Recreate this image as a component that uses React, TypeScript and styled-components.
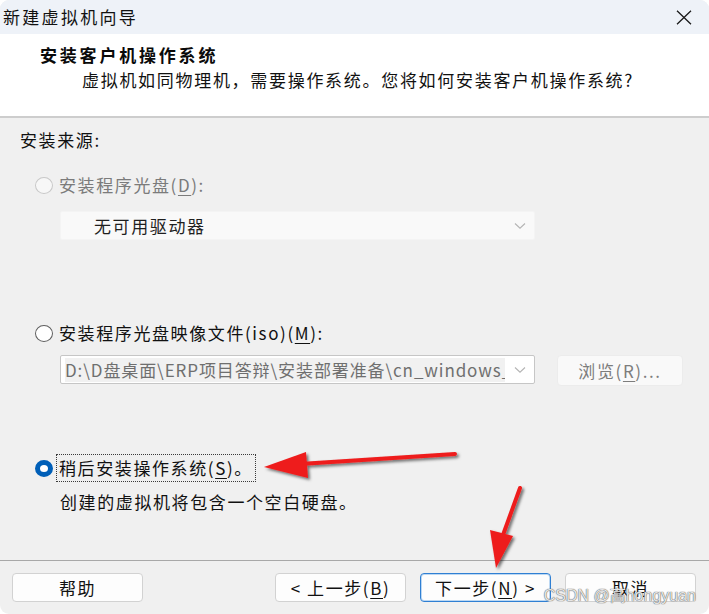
import React from "react";
import styled, { createGlobalStyle } from "styled-components";

const GlobalStyle = createGlobalStyle`
  html, body { margin: 0; padding: 0; background: #ffffff; }
  body { font-family: "Noto Sans CJK SC", "Noto Sans", sans-serif; }
`;

const Window = styled.div`
  position: relative;
  width: 709px;
  height: 614px;
  border-radius: 9px;
  overflow: hidden;
  display: flex;
  flex-direction: column;
  background: #f0f0f0;
  color: #111111;
  font-family: "Noto Sans CJK SC", "Noto Sans", sans-serif;
  font-size: 17px;
  letter-spacing: 1.6px;
`;

const TitleBar = styled.div`
  height: 34px;
  flex: none;
  background: #eef2f8;
  display: flex;
  align-items: center;
  justify-content: space-between;
  padding: 0 17px 0 3px;
  box-sizing: border-box;
`;

const TitleText = styled.span`
  font-size: 17px;
  letter-spacing: 2.3px;
  color: #111;
  line-height: 34px;
`;

const Header = styled.div`
  height: 82px;
  flex: none;
  background: #ffffff;
  padding: 9px 0 0 40px;
  box-sizing: border-box;
  display: flex;
  flex-direction: column;
`;

const HeaderTitle = styled.div`
  font-weight: 700;
  font-size: 17px;
  letter-spacing: 2.8px;
  line-height: 24px;
  color: #0a0a0a;
`;

const HeaderSub = styled.div`
  margin-left: 42px;
  margin-top: 1px;
  line-height: 24px;
  letter-spacing: 1.7px;
  color: #111;
`;

const Divider = styled.div<{ $thick?: boolean }>`
  flex: none;
  height: ${(p) => (p.$thick ? 2 : 1)}px;
  background: ${(p) => (p.$thick ? "#cdcdcd" : "#a8a8a8")};
`;

const Body = styled.div`
  flex: 1;
  padding: 0 20px;
  display: flex;
  flex-direction: column;
`;

const SectionLabel = styled.div`
  margin-top: 10px;
  line-height: 24px;
`;

const RadioRow = styled.label<{ $top: number; $disabled?: boolean }>`
  margin-top: ${(p) => p.$top}px;
  margin-left: 15px;
  height: 24px;
  display: flex;
  align-items: center;
  gap: 6px;
  color: ${(p) => (p.$disabled ? "#7b7b7b" : "#111111")};
`;

const RadioDot = styled.span<{ $checked?: boolean; $disabled?: boolean }>`
  width: 18px;
  height: 17px;
  border-radius: 50%;
  box-sizing: border-box;
  flex: none;
  background: #ffffff;
  border: ${(p) =>
    p.$checked
      ? "5px solid #005fb8"
      : p.$disabled
      ? "1px solid #c8c8c8"
      : "1px solid #5f5f5f"};
  ${(p) => (p.$disabled ? "background: #f7f7f7;" : "")}
`;

const RadioText = styled.span<{ $focused?: boolean }>`
  line-height: 24px;
  padding: 1px 2px;
  border: 1px dotted ${(p) => (p.$focused ? "#3a3a3a" : "transparent")};
  margin-left: -3px;
`;

const Mn = styled.span`
  text-decoration: underline;
  text-underline-offset: 3px;
  text-decoration-thickness: 1px;
`;

const FieldRow = styled.div<{ $top: number }>`
  margin-top: ${(p) => p.$top}px;
  margin-left: 40px;
  display: flex;
  align-items: flex-start;
  gap: 22px;
`;

const Select = styled.div<{ $framed?: boolean }>`
  width: 475px;
  height: 29px;
  box-sizing: border-box;
  display: flex;
  align-items: center;
  justify-content: space-between;
  background: ${(p) => (p.$framed ? "#ffffff" : "#f9f9f9")};
  border: 1px solid ${(p) => (p.$framed ? "#c6c6c6" : "#f4f4f4")};
  border-radius: 2px;
  padding: 0 8px 0 ${(p) => (p.$framed ? 4 : 33)}px;
`;

const SelectText = styled.span<{ $muted?: boolean }>`
  line-height: 24px;
  white-space: nowrap;
  overflow: hidden;
  color: ${(p) => (p.$muted ? "#6f6f6f" : "#1f1f1f")};
  background: ${(p) => (p.$muted ? "#f1f1f1" : "transparent")};
  letter-spacing: ${(p) => (p.$muted ? "0.9px" : "1.6px")};
  width: ${(p) => (p.$muted ? "440px" : "auto")};
`;

const Chevron = () => (
  <svg width="12" height="8" viewBox="0 0 12 8">
    <path d="M1 1.5 L6 6.2 L11 1.5" fill="none" stroke="#b4b4b4" strokeWidth="1.1" />
  </svg>
);

const BrowseButton = styled.div`
  width: 126px;
  height: 31px;
  box-sizing: border-box;
  background: #f9f9f9;
  border: 1px solid #ececec;
  border-radius: 4px;
  display: flex;
  align-items: center;
  justify-content: center;
  color: #7d7d7d;
`;

const Description = styled.div`
  margin-top: 10px;
  margin-left: 40px;
  line-height: 24px;
`;

const Footer = styled.div`
  flex: none;
  height: 53px;
  padding: 12px 13px 0 12px;
  box-sizing: border-box;
  display: flex;
  justify-content: space-between;
  align-items: flex-start;
`;

const ButtonGroup = styled.div`
  display: flex;
  gap: 14px;
`;

const Button = styled.div<{ $primary?: boolean }>`
  width: 131px;
  height: 29px;
  box-sizing: border-box;
  border-radius: 4px;
  background: #fdfdfd;
  border: 1px solid ${(p) => (p.$primary ? "#2f7fd3" : "#d2d2d2")};
  box-shadow: ${(p) => (p.$primary ? "inset 0 0 0 1px #bcd8f3" : "none")};
  display: flex;
  align-items: center;
  justify-content: center;
  line-height: 24px;
  color: #111111;
`;

const Overlay = styled.svg`
  position: absolute;
  left: 0;
  top: 0;
  pointer-events: none;
`;

const Watermark = styled.div`
  position: absolute;
  right: 13px;
  bottom: 7px;
  font-family: "Liberation Sans", Arial, sans-serif;
  font-size: 16px;
  letter-spacing: 0;
  color: rgba(255, 255, 255, 0.85);
  text-shadow: 0 0 1px #5a5a5a, 0 0 1px #5a5a5a;
`;

export default function App() {
  return (
    <>
      <GlobalStyle />
      <Window>
        <TitleBar>
          <TitleText>新建虚拟机向导</TitleText>
          <svg width="16" height="15" viewBox="0 0 16 15">
            <path d="M1 0.8 L15 14.2 M15 0.8 L1 14.2" stroke="#1a1a1a" strokeWidth="1.3" />
          </svg>
        </TitleBar>
        <Header>
          <HeaderTitle>安装客户机操作系统</HeaderTitle>
          <HeaderSub>虚拟机如同物理机，需要操作系统。您将如何安装客户机操作系统?</HeaderSub>
        </Header>
        <Divider $thick />
        <Body>
          <SectionLabel>安装来源:</SectionLabel>
          <RadioRow $top={21} $disabled>
            <RadioDot $disabled />
            <RadioText>
              安装程序光盘(<Mn>D</Mn>):
            </RadioText>
          </RadioRow>
          <FieldRow $top={14}>
            <Select>
              <SelectText>无可用驱动器</SelectText>
              <Chevron />
            </Select>
          </FieldRow>
          <RadioRow $top={81}>
            <RadioDot />
            <RadioText>
              安装程序光盘映像文件(iso)(<Mn>M</Mn>):
            </RadioText>
          </RadioRow>
          <FieldRow $top={10}>
            <Select $framed>
              <SelectText $muted>D:\D盘桌面\ERP项目答辩\安装部署准备\cn_windows_</SelectText>
              <Chevron />
            </Select>
            <BrowseButton>
              浏览(<Mn>R</Mn>)...
            </BrowseButton>
          </FieldRow>
          <RadioRow $top={70}>
            <RadioDot $checked />
            <RadioText $focused>
              稍后安装操作系统(<Mn>S</Mn>)。
            </RadioText>
          </RadioRow>
          <Description>创建的虚拟机将包含一个空白硬盘。</Description>
        </Body>
        <Divider />
        <Footer>
          <Button>帮助</Button>
          <ButtonGroup>
            <Button>
              &lt; 上一步(<Mn>B</Mn>)
            </Button>
            <Button $primary>
              下一步(<Mn>N</Mn>) &gt;
            </Button>
            <Button>取消</Button>
          </ButtonGroup>
        </Footer>
        <Overlay width="709" height="614" viewBox="0 0 709 614">
          <defs>
            <filter id="sh" x="-20%" y="-20%" width="140%" height="140%">
              <feDropShadow dx="2" dy="2" stdDeviation="1.6" floodColor="#000" floodOpacity="0.55" />
            </filter>
          </defs>
          <g filter="url(#sh)" fill="#ee1c1c" stroke="#ee1c1c" strokeLinecap="round">
            <line x1="455" y1="454" x2="300" y2="464" strokeWidth="4" />
            <polygon points="264,467 306,452 308,478" stroke="none" />
            <line x1="520" y1="488" x2="503" y2="535" strokeWidth="4" />
            <polygon points="496,568 490,530 513,536" stroke="none" />
          </g>
        </Overlay>
        <Watermark>CSDN @高hongyuan</Watermark>
      </Window>
    </>
  );
}
